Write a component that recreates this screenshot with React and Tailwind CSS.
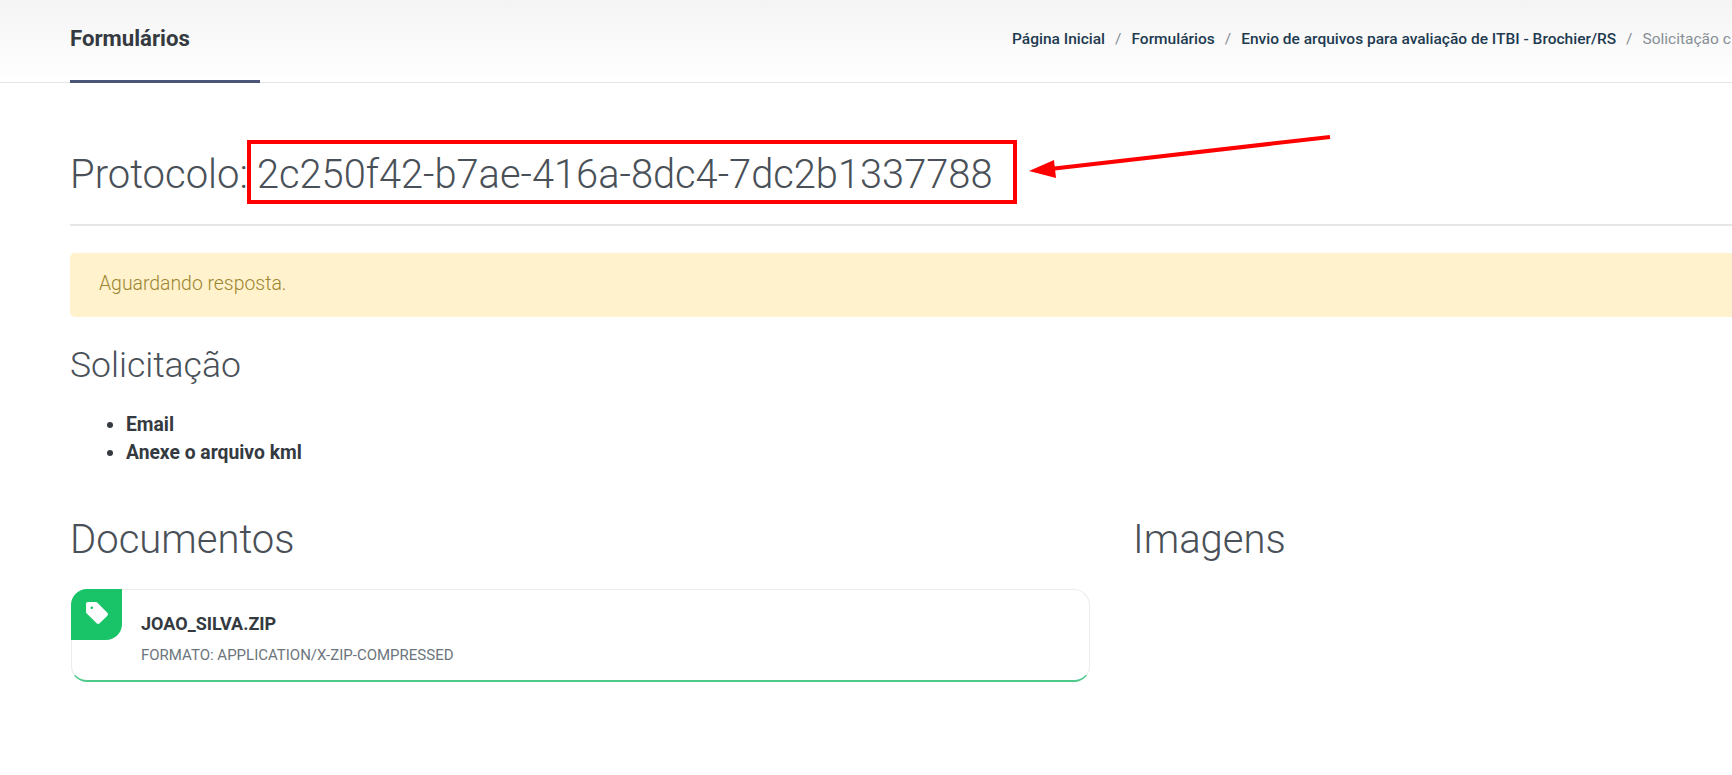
import { Tag } from "lucide-react";

function Breadcrumb() {
  const links = [
    "Página Inicial",
    "Formulários",
    "Envio de arquivos para avaliação de ITBI - Brochier/RS",
  ];
  return (
    <nav className="ml-[752px] flex items-center whitespace-nowrap pb-[3px] text-[15.5px] font-medium text-[#1d3a50]">
      {links.map((link) => (
        <span key={link} className="flex items-center">
          <span>{link}</span>
          <span className="px-[10px] font-normal text-[#868e96]">/</span>
        </span>
      ))}
      <span className="font-normal text-[#868e96]">Solicitação c</span>
    </nav>
  );
}

function DocumentCard() {
  return (
    <div className="relative ml-px h-[93px] w-[1019px] rounded-[16px] border border-b-2 border-[#ececec] border-b-[#4fc98a] bg-white">
      <div className="absolute -left-px -top-px flex h-[51px] w-[51px] items-start rounded-tl-[16px] rounded-br-[16px] bg-[#19c468] pl-[12px] pt-[10px]">
        <Tag size={28} fill="#ffffff" stroke="#19c468" strokeWidth={1.2} />
      </div>
      <div className="pl-[69px] pt-[23px]">
        <p className="text-[18px] font-bold leading-[22px] text-[#343a40]">JOAO_SILVA.ZIP</p>
        <p className="mt-[10px] text-[15px] leading-[20px] text-[#6c757d]">
          FORMATO: APPLICATION/X-ZIP-COMPRESSED
        </p>
      </div>
    </div>
  );
}

export default function App() {
  return (
    <div className="relative h-[775px] w-[1732px] overflow-hidden bg-white font-['Roboto',sans-serif]">
      {/* Page title bar */}
      <header className="flex h-[83px] items-stretch border-b border-[#e4e4e4] bg-gradient-to-b from-[#f4f4f4] to-white pl-[70px]">
        <div className="-mb-px w-[190px] shrink-0 border-b-[3px] border-[#4a5578] pt-[24px]">
          <h1 className="text-[22.2px] font-bold leading-[28px] text-[#343a40]">Formulários</h1>
        </div>
        <Breadcrumb />
      </header>

      <main className="w-[1800px] pl-[70px]">
        <div className="flex h-[143px] items-start border-b-2 border-[#e6e6e6] pt-[57px]">
          <h2 className="flex h-[64px] items-start text-[40px] font-light text-[#495057]">
            <span className="leading-[70px]">Protocolo:</span>
            <span className="-ml-px flex h-[64px] w-[770px] items-center border-4 border-[#fe0000] pl-[6px] pt-[5px] text-[39.8px]">
              2c250f42-b7ae-416a-8dc4-7dc2b1337788
            </span>
          </h2>
        </div>

        <div className="mt-[27px] flex h-[64px] items-center rounded-[5px] bg-[#fff2cc] pb-[2px] pl-[29px] text-[19.4px] font-light text-[#9c8530]">
          Aguardando resposta.
        </div>

        <h3 className="mt-[24px] text-[35.5px] font-light leading-[48px] text-[#495057]">Solicitação</h3>
        <ul className="ml-[40px] mt-[22px] list-disc pl-[16px] text-[19.3px] font-bold leading-[27.5px] text-[#343a40]">
          <li>Email</li>
          <li>Anexe o arquivo kml</li>
        </ul>

        <div className="mt-[46px] flex">
          <section className="w-[1063px]">
            <h3 className="text-[40px] font-light leading-[56px] text-[#495057]">Documentos</h3>
            <div className="mt-[21px]">
              <DocumentCard />
            </div>
          </section>
          <section>
            <h3 className="text-[40px] font-light leading-[56px] text-[#495057]">Imagens</h3>
          </section>
        </div>
      </main>

      {/* Annotation arrow */}
      <svg className="absolute left-[1010px] top-[130px]" width="330" height="50" viewBox="0 0 330 50">
        <line x1="320" y1="7" x2="40" y2="39" stroke="#fe0000" strokeWidth="4" />
        <polygon points="19,41 44,30 46,48" fill="#fe0000" />
      </svg>
    </div>
  );
}
